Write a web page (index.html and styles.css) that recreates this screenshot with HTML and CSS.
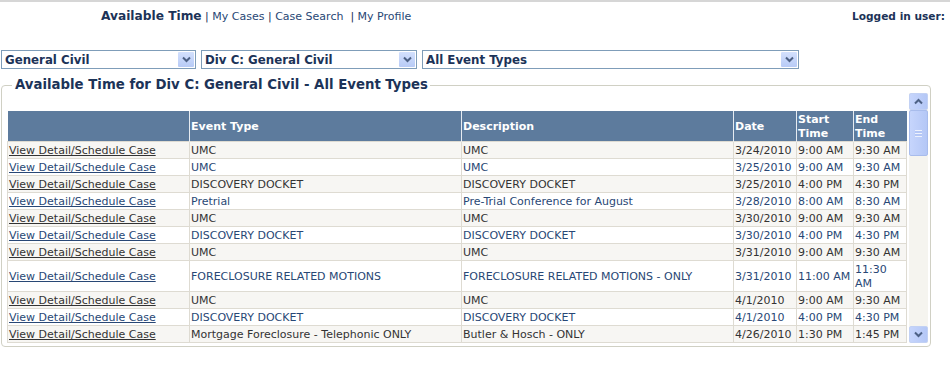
FILE: index.html
```html
<!doctype html>
<html lang="en">
    <head>
        <meta charset="UTF-8" />
        <title>Available Time</title>
        <link rel="stylesheet" href="styles.css">
    </head>
    <body>
        <div class="topbar">
            <div class="menu">
                <span class="current">Available Time</span> | <a href="#">My Cases</a> | <a href="#">Case Search</a> &nbsp;| <a href="#">My Profile</a>
            </div>
            <div class="user">Logged in user:</div>
        </div>

        <div class="filters">
            <div class="combo combo-court">
                <select><option>General Civil</option></select>
                <span class="combo-btn"><svg width="9" height="7" viewBox="0 0 9 7"><polyline points="1,1.5 4.5,5 8,1.5" fill="none" stroke="#4d6185" stroke-width="2"/></svg></span>
            </div>
            <div class="combo combo-div">
                <select><option>Div C: General Civil</option></select>
                <span class="combo-btn"><svg width="9" height="7" viewBox="0 0 9 7"><polyline points="1,1.5 4.5,5 8,1.5" fill="none" stroke="#4d6185" stroke-width="2"/></svg></span>
            </div>
            <div class="combo combo-type">
                <select><option>All Event Types</option></select>
                <span class="combo-btn"><svg width="9" height="7" viewBox="0 0 9 7"><polyline points="1,1.5 4.5,5 8,1.5" fill="none" stroke="#4d6185" stroke-width="2"/></svg></span>
            </div>
        </div>

        <fieldset class="panel">
            <legend>Available Time for Div C: General Civil - All Event Types</legend>
            <div class="scroller">
                <div class="grid-wrap">
                    <table class="grid">
                        <colgroup>
                            <col style="width: 182px">
                            <col style="width: 272px">
                            <col style="width: 272px">
                            <col style="width: 63px">
                            <col style="width: 57px">
                            <col style="width: 53px">
                        </colgroup>
                        <thead>
                            <tr>
                                <th></th>
                                <th>Event Type</th>
                                <th>Description</th>
                                <th>Date</th>
                                <th>Start Time</th>
                                <th>End Time</th>
                            </tr>
                        </thead>
                        <tbody>
                            <tr><td><a href="#">View Detail/Schedule Case</a></td><td>UMC</td><td>UMC</td><td>3/24/2010</td><td>9:00 AM</td><td>9:30 AM</td></tr>
                            <tr><td><a href="#">View Detail/Schedule Case</a></td><td>UMC</td><td>UMC</td><td>3/25/2010</td><td>9:00 AM</td><td>9:30 AM</td></tr>
                            <tr><td><a href="#">View Detail/Schedule Case</a></td><td>DISCOVERY DOCKET</td><td>DISCOVERY DOCKET</td><td>3/25/2010</td><td>4:00 PM</td><td>4:30 PM</td></tr>
                            <tr><td><a href="#">View Detail/Schedule Case</a></td><td>Pretrial</td><td>Pre-Trial Conference for August</td><td>3/28/2010</td><td>8:00 AM</td><td>8:30 AM</td></tr>
                            <tr><td><a href="#">View Detail/Schedule Case</a></td><td>UMC</td><td>UMC</td><td>3/30/2010</td><td>9:00 AM</td><td>9:30 AM</td></tr>
                            <tr><td><a href="#">View Detail/Schedule Case</a></td><td>DISCOVERY DOCKET</td><td>DISCOVERY DOCKET</td><td>3/30/2010</td><td>4:00 PM</td><td>4:30 PM</td></tr>
                            <tr><td><a href="#">View Detail/Schedule Case</a></td><td>UMC</td><td>UMC</td><td>3/31/2010</td><td>9:00 AM</td><td>9:30 AM</td></tr>
                            <tr><td><a href="#">View Detail/Schedule Case</a></td><td>FORECLOSURE RELATED MOTIONS</td><td>FORECLOSURE RELATED MOTIONS - ONLY</td><td>3/31/2010</td><td>11:00 AM</td><td>11:30 AM</td></tr>
                            <tr><td><a href="#">View Detail/Schedule Case</a></td><td>UMC</td><td>UMC</td><td>4/1/2010</td><td>9:00 AM</td><td>9:30 AM</td></tr>
                            <tr><td><a href="#">View Detail/Schedule Case</a></td><td>DISCOVERY DOCKET</td><td>DISCOVERY DOCKET</td><td>4/1/2010</td><td>4:00 PM</td><td>4:30 PM</td></tr>
                            <tr><td><a href="#">View Detail/Schedule Case</a></td><td>Mortgage Foreclosure - Telephonic ONLY</td><td>Butler &amp; Hosch - ONLY</td><td>4/26/2010</td><td>1:30 PM</td><td>1:45 PM</td></tr>
                        </tbody>
                    </table>
                </div>
                <div class="vscroll">
                    <span class="sb-btn"><svg width="9" height="7" viewBox="0 0 9 7"><polyline points="1,5.5 4.5,2 8,5.5" fill="none" stroke="#4d6185" stroke-width="2"/></svg></span>
                    <span class="sb-track">
                        <span class="sb-thumb"><span class="grip"></span></span>
                    </span>
                    <span class="sb-btn"><svg width="9" height="7" viewBox="0 0 9 7"><polyline points="1,1.5 4.5,5 8,1.5" fill="none" stroke="#4d6185" stroke-width="2"/></svg></span>
                </div>
            </div>
        </fieldset>
    </body>
</html>
```

FILE: styles.css
```css
body {
    margin: 0;
    font-family: "DejaVu Sans", Tahoma, sans-serif;
    font-size: 11px;
    color: #333333;
    background-color: #ffffff;
    border-top: 2px solid #d6d6d6;
}
a {
    color: inherit;
}

/* верхнее меню */
.topbar {
    display: flex;
    justify-content: space-between;
    align-items: baseline;
    height: 34px;
    padding: 7px 5px 0 101px;
    box-sizing: border-box;
}
.menu {
    font-size: 11px;
    color: #1c3358;
}
.menu a {
    color: #284775;
    text-decoration: none;
}
.menu .current {
    font-size: 12.2px;
    font-weight: bold;
    color: #1c3358;
}
.user {
    font-size: 10.6px;
    font-weight: bold;
    color: #1c3358;
}

/* фильтры */
.filters {
    display: flex;
    gap: 5px;
    margin-top: 14px;
    padding-left: 1px;
}
.combo {
    display: flex;
    height: 19px;
    box-sizing: border-box;
    border: 1px solid #7f9db9;
    background-color: #ffffff;
}
.combo-court { width: 195px; }
.combo-div { width: 216px; }
.combo-type { width: 377px; }
.combo select {
    flex: 1;
    appearance: none;
    border: none;
    outline: none;
    background: transparent;
    padding: 1px 3px 0;
    font-family: inherit;
    font-size: 11.8px;
    font-weight: bold;
    color: #1c3358;
}
.combo-btn {
    width: 16px;
    margin: 1px;
    display: flex;
    align-items: center;
    justify-content: center;
    background: linear-gradient(#d3e0fd, #b8cbf6);
    border-radius: 1px;
}

/* панель */
.panel {
    margin: 8px 0 0 1px;
    width: 930px;
    box-sizing: border-box;
    padding: 0 2px 3px 5px;
    border: 1px solid #d0d0c4;
    border-radius: 4px;
}
.panel legend {
    margin-left: 5px;
    padding: 0 2px 0 3px;
    font-size: 13.3px;
    line-height: 16px;
    font-weight: bold;
    color: #1c3358;
}
.scroller {
    display: flex;
    height: 250px;
}
.grid-wrap {
    width: 901px;
    padding-top: 18px;
    overflow: hidden;
}
.grid {
    width: 900px;
    table-layout: fixed;
    border-collapse: collapse;
}
.grid th {
    height: 30px;
    padding: 2px 1px 0;
    box-sizing: border-box;
    text-align: left;
    font-size: 11px;
    font-weight: bold;
    line-height: 14px;
    color: #ffffff;
    background-color: #5d7b9d;
    border-left: 1px solid #e6ebf1;
}
.grid th:first-child {
    border-left: none;
}
.grid td {
    padding: 2px 1px 0;
    line-height: 14px;
    border: 1px solid #dedbd2;
    vertical-align: middle;
}
.grid tbody tr:nth-child(odd) {
    background-color: #f7f6f3;
    color: #333333;
}
.grid tbody tr:nth-child(even) {
    background-color: #ffffff;
    color: #284775;
}

/* полоса прокрутки */
.vscroll {
    width: 19px;
    margin-left: 1px;
    display: flex;
    flex-direction: column;
    background-color: #f5f4ef;
}
.sb-btn {
    height: 17px;
    display: flex;
    align-items: center;
    justify-content: center;
    background: linear-gradient(90deg, #c6d5fc, #b4c7f6);
    border: 1px solid #c2d1f4;
    border-radius: 2px;
    box-sizing: border-box;
}
.sb-track {
    flex: 1;
}
.sb-thumb {
    height: 46px;
    display: flex;
    align-items: center;
    justify-content: center;
    background: linear-gradient(90deg, #c6d5fc, #b4c7f6);
    border: 1px solid #a8bcec;
    border-radius: 2px;
    box-sizing: border-box;
}
.grip {
    width: 7px;
    height: 5px;
    border-top: 1px solid #eef2fd;
    border-bottom: 1px solid #eef2fd;
    background: linear-gradient(#b4c7f6 40%, #eef2fd 40%, #eef2fd 60%, #b4c7f6 60%);
}
```
